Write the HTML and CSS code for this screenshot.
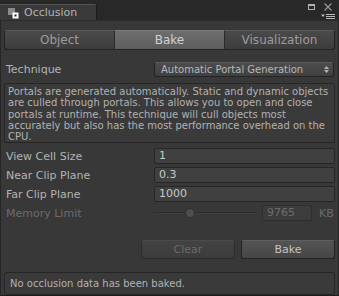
FILE: index.html
```html
<!DOCTYPE html>
<html>
<head>
<meta charset="utf-8">
<link rel="stylesheet" href="styles.css">
</head>
<body>
<div class="window">
  <div class="titlebar">
    <div class="tab">
      <svg class="tab-icon" width="11" height="11" viewBox="0 0 11 11">
        <rect x="0" y="0" width="7" height="7" fill="#8a8a8a"/>
        <rect x="4.5" y="4.5" width="6" height="6" fill="#ffffff"/>
        <rect x="6.5" y="6.5" width="2" height="2" fill="#222"/>
      </svg>
      <span class="tab-title">Occlusion</span>
    </div>
    <div class="win-controls">
      <div class="ctrl-top">
        <svg width="7" height="6" viewBox="0 0 7 6"><rect x="0.5" y="0.5" width="6" height="5" fill="none" stroke="#b0b0b0"/><rect x="0" y="0" width="7" height="2" fill="#b0b0b0"/></svg>
        <svg width="8" height="8" viewBox="0 0 8 8"><path d="M0.5 0.5 L7.5 7.5 M7.5 0.5 L0.5 7.5" stroke="#9a9a9a" stroke-width="1.1"/></svg>
      </div>
      <svg class="ctrl-menu" width="14" height="5" viewBox="0 0 14 5"><path d="M0 0.5 H4 L2 3 Z" fill="#b8b8b8"/><rect x="5" y="0" width="9" height="1" fill="#b8b8b8"/><rect x="5" y="2" width="9" height="1" fill="#b8b8b8"/><rect x="5" y="4" width="9" height="1" fill="#b8b8b8"/></svg>
    </div>
  </div>
  <div class="panel">
    <div class="toolbar">
      <div class="tb-btn tb-left">Object</div>
      <div class="tb-btn tb-mid active">Bake</div>
      <div class="tb-btn tb-right">Visualization</div>
    </div>
    <div class="row technique">
      <div class="label">Technique</div>
      <div class="popup"><span>Automatic Portal Generation</span><svg class="arrows" width="5" height="7" viewBox="0 0 5 7"><path d="M0 3 L2.5 0 L5 3 Z M0 4 L5 4 L2.5 7 Z" fill="#b4b4b4"/></svg></div>
    </div>
    <div class="helpbox">Portals are generated automatically. Static and dynamic objects are culled through portals. This allows you to open and close portals at runtime. This technique will cull objects most accurately but also has the most performance overhead on the CPU.</div>
    <div class="fields">
      <div class="row">
        <div class="label">View Cell Size</div>
        <div class="field">1</div>
      </div>
      <div class="row">
        <div class="label">Near Clip Plane</div>
        <div class="field">0.3</div>
      </div>
      <div class="row">
        <div class="label">Far Clip Plane</div>
        <div class="field">1000</div>
      </div>
      <div class="row">
        <div class="label disabled">Memory Limit</div>
        <div class="slider-wrap">
          <div class="slider">
            <div class="track"></div>
            <div class="knob"></div>
          </div>
          <div class="field small disabled">9765</div>
          <div class="unit">KB</div>
        </div>
      </div>
    </div>
    <div class="buttons">
      <div class="button disabled">Clear</div>
      <div class="button">Bake</div>
    </div>
    <div class="status">No occlusion data has been baked.</div>
  </div>
</div>
</body>
</html>
```
FILE: styles.css
```css
* { box-sizing: border-box; }
html, body { margin: 0; padding: 0; }
body {
  width: 339px;
  height: 296px;
  background: #1e1e1e;
  font-family: "DejaVu Sans", sans-serif;
  color: #b4b4b4;
  overflow: hidden;
}
.window {
  width: 339px;
  height: 296px;
  display: flex;
  flex-direction: column;
  background: #262626;
}
.titlebar {
  height: 20px;
  display: flex;
  justify-content: space-between;
  align-items: flex-end;
  background: #282828;
  flex: none;
}
.tab {
  width: 97px;
  height: 16px;
  background: #3a3a3a;
  border-top: 1px solid #555;
  border-right: 1px solid #1c1c1c;
  border-top-right-radius: 3px;
  display: flex;
  align-items: center;
  padding-left: 8px;
}
.tab-icon { margin-top: 2px; flex: none; }
.tab-title {
  font-size: 11px;
  margin-left: 5px;
  color: #b4b4b4;
  line-height: 14px;
}
.win-controls {
  align-self: stretch;
  display: flex;
  flex-direction: column;
  align-items: flex-end;
  padding: 3px 6px 0 0;
}
.ctrl-top { display: flex; gap: 9px; align-items: flex-start; margin-right: 1px; }
.ctrl-top svg:first-child { margin-top: 1px; }
.ctrl-menu { margin-top: 3px; margin-right: -2px; }
.panel {
  flex: 1;
  background: #383838;
  border-top: 1px solid #2c2c2c;
  border-left: 1px solid #262626;
  border-right: 1px solid #262626;
  border-bottom: 3px solid #1e1e1e;
  padding: 9px 3px 0 3px;
  display: flex;
  flex-direction: column;
}
.toolbar {
  display: flex;
  height: 20px;
}
.tb-btn {
  flex: 1;
  display: flex;
  align-items: center;
  justify-content: center;
  font-size: 12px;
  color: #9c9c9c;
  background: linear-gradient(#4a4a4a, #3d3d3d);
  border: 1px solid #232323;
  border-top-color: #5a5a5a;
}
.tb-left { border-radius: 3px 0 0 3px; border-right: none; }
.tb-right { border-radius: 0 3px 3px 0; border-left: none; }
.tb-mid { border-left-color: #2a2a2a; border-right-color: #2a2a2a; }
.tb-btn.active {
  background: linear-gradient(#6e6e6e, #5d5d5d);
  color: #d2d2d2;
  border-top-color: #7a7a7a;
}
.row {
  display: flex;
  align-items: center;
  height: 16px;
}
.label {
  width: 150px;
  flex: none;
  padding-left: 2px;
  font-size: 11px;
  color: #b4b4b4;
}
.label.disabled { color: #6c6c6c; }
.technique { margin-top: 12px; height: 15px; }
.popup {
  flex: 1;
  height: 15px;
  background: linear-gradient(#4c4c4c, #404040);
  border: 1px solid #242424;
  border-top-color: #5a5a5a;
  border-radius: 3px;
  display: flex;
  align-items: center;
  justify-content: space-between;
  padding: 0 4px 0 6px;
  font-size: 10px;
  color: #b8b8b8;
  margin-right: 1px;
}
.arrows { flex: none; }
.helpbox {
  margin-top: 6px;
  height: 60px;
  background: #3a3a3a;
  border: 1px solid #262626;
  border-radius: 2px;
  padding: 2px 3px;
  font-size: 10px;
  line-height: 11.3px;
  color: #b2b2b2;
}
.fields {
  margin-top: 5px;
  display: flex;
  flex-direction: column;
  gap: 3px;
}
.field {
  flex: 1;
  height: 16px;
  background: #404040;
  border: 1px solid #262626;
  border-radius: 2px;
  font-size: 11px;
  line-height: 14px;
  padding-left: 4px;
  color: #c8c8c8;
}
.field.disabled { color: #6c6c6c; background: #3c3c3c; border-color: #2e2e2e; }
.slider-wrap {
  flex: 1;
  display: flex;
  align-items: center;
}
.slider {
  width: 102px;
  height: 16px;
  position: relative;
  display: flex;
  align-items: center;
}
.track {
  width: 100%;
  height: 2px;
  background: #2c2c2c;
  border-bottom: 1px solid #404040;
}
.knob {
  position: absolute;
  left: 31px;
  top: 3px;
  width: 10px;
  height: 10px;
  border-radius: 50%;
  background: #4e4e4e;
  border: 1px solid #2e2e2e;
}
.field.small { flex: none; width: 50px; margin-left: 6px; }
.unit {
  margin-left: 7px;
  font-size: 11px;
  color: #6c6c6c;
}
.buttons {
  margin-top: 19px;
  display: flex;
  justify-content: flex-end;
  gap: 6px;
}
.button {
  width: 94px;
  height: 19px;
  display: flex;
  align-items: center;
  justify-content: center;
  font-size: 11px;
  color: #c4c4c4;
  background: linear-gradient(#545454, #464646);
  border: 1px solid #242424;
  border-top-color: #606060;
  border-radius: 3px;
}
.button.disabled {
  color: #6a6a6a;
  background: linear-gradient(#434343, #3c3c3c);
  border-color: #2c2c2c;
  border-top-color: #4a4a4a;
}
.status {
  margin-top: 13px;
  height: 23px;
  background: #3a3a3a;
  border: 1px solid #262626;
  border-radius: 3px;
  display: flex;
  align-items: center;
  padding-left: 5px;
  font-size: 10px;
  color: #b2b2b2;
}
```
